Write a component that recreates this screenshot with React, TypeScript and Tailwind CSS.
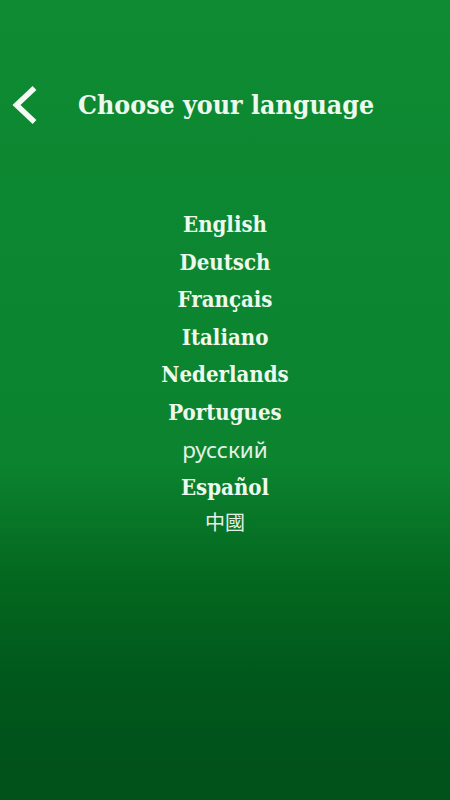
import React from "react";

const langs = [
  { t: "English", b: true },
  { t: "Deutsch", b: true },
  { t: "Français", b: true },
  { t: "Italiano", b: true },
  { t: "Nederlands", b: true },
  { t: "Portugues", b: true },
  { t: "русский", b: false },
  { t: "Español", b: true },
];

export default function App() {
  return (
    <div className="w-[450px] h-[800px] overflow-hidden bg-[linear-gradient(180deg,#0e8b33_0%,#0b832f_58%,#04681f_72%,#00581c_85%,#00501a_100%)] flex flex-col">
      <div className="flex items-center h-[40px] mt-[85px] pl-[12px]">
        <svg width="26" height="40" viewBox="0 0 26 40" className="shrink-0">
          <path d="M22.5 3 L4.5 20 L22.5 37" fill="none" stroke="#f4fbf4" strokeWidth="5.5" strokeLinecap="butt" strokeLinejoin="miter" />
        </svg>
        <div className="ml-[40px] text-[26.5px] font-bold text-[#eef9ee] [font-family:'DejaVu_Serif',serif] [font-stretch:condensed] leading-none">
          Choose your language
        </div>
      </div>
      <div className="flex flex-col items-center mt-[81px]">
        {langs.map((l) =>
          l.b ? (
            <div key={l.t} className="h-[37.5px] flex items-center text-[22px] font-bold text-[#eef9ee] [font-family:'DejaVu_Serif',serif] [font-stretch:condensed]">
              {l.t}
            </div>
          ) : (
            <div key={l.t} className="h-[37.5px] flex items-center text-[22.5px] text-[#e3f1e5] [font-family:'Noto_Sans',sans-serif]">
              {l.t}
            </div>
          )
        )}
        <div className="h-[32px] flex items-center text-[20px] text-[#e3f1e5] [font-family:'Noto_Sans_CJK_TC',sans-serif]">
          中國
        </div>
      </div>
    </div>
  );
}
